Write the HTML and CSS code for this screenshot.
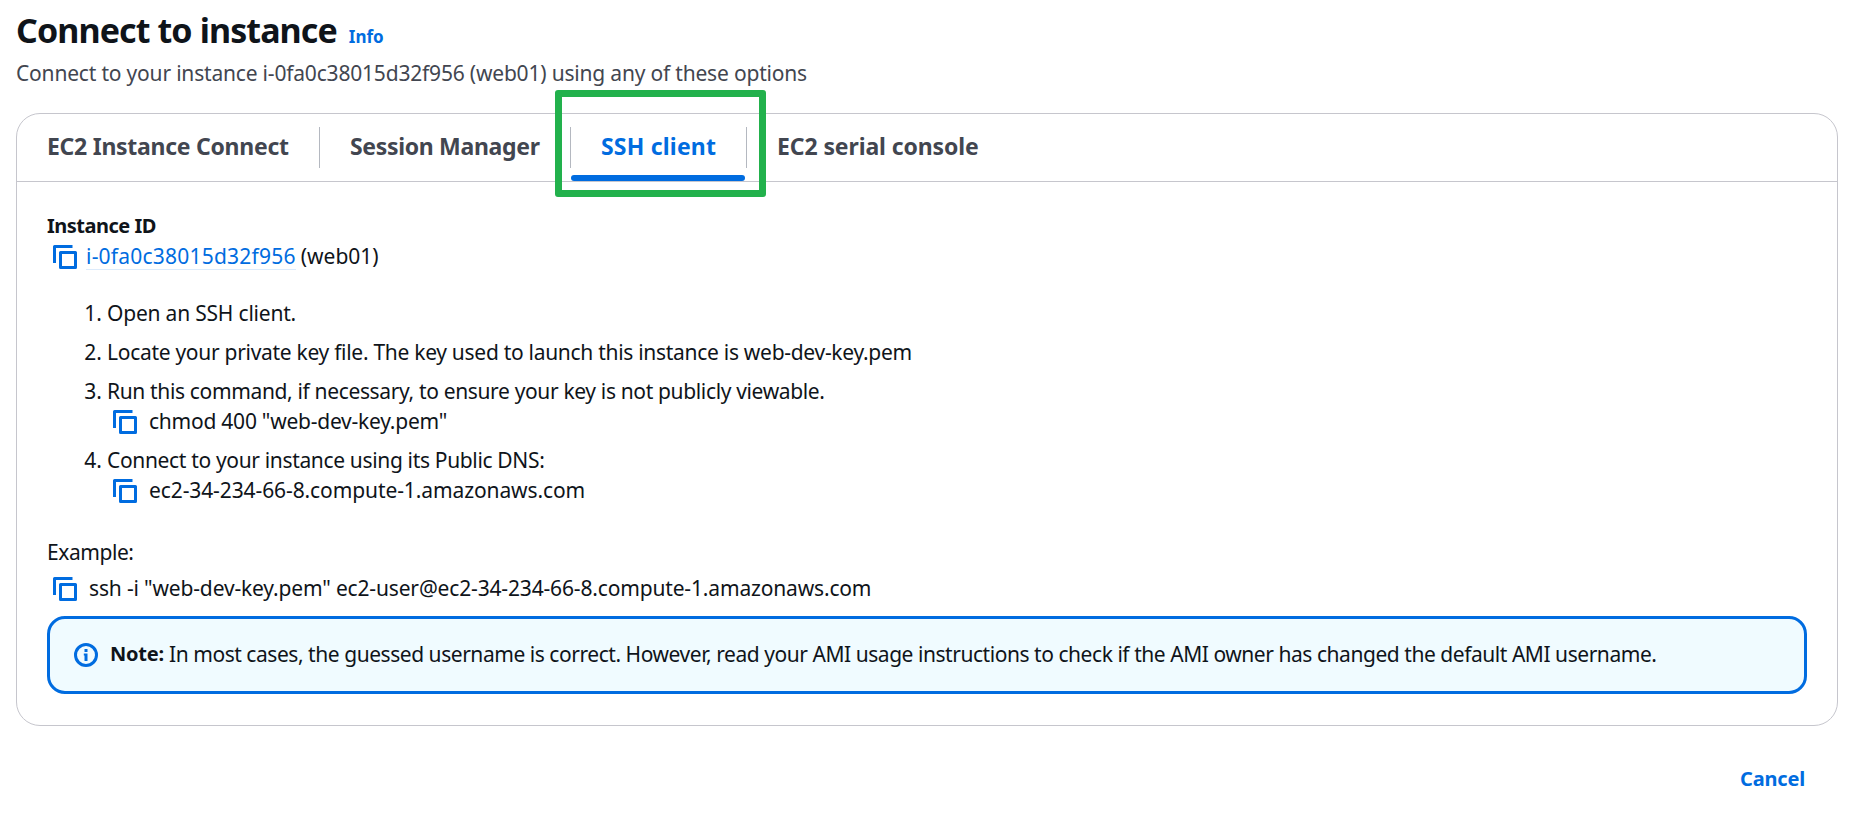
FILE: index.html
```
<!DOCTYPE html>
<html lang="en">
<head>
<meta charset="utf-8">
<title>Connect to instance</title>
<link rel="stylesheet" href="styles.css">
</head>
<body>
<svg class="sprite" aria-hidden="true">
  <symbol id="copy" viewBox="0 0 24 24">
    <path d="M1.5 18V1.5H19.5" fill="none" stroke="currentColor" stroke-width="3" stroke-linejoin="round"/>
    <rect x="7.5" y="7.5" width="15" height="15" fill="none" stroke="currentColor" stroke-width="3" stroke-linejoin="round"/>
  </symbol>
  <symbol id="info" viewBox="0 0 24 24">
    <circle cx="12" cy="12" r="10.5" fill="none" stroke="currentColor" stroke-width="3"/>
    <path d="M10.5 6h3v3h-3zM9.8 10.5h3.7v7.5h-3v-5.5h-.7z" fill="currentColor"/>
  </symbol>
</svg>
<main class="page">
  <header class="page-header">
    <div class="title-row">
      <h1 class="title">Connect to instance</h1>
      <a class="info-link">Info</a>
    </div>
    <p class="subtitle">Connect to your instance i-0fa0c38015d32f956 (web01) using any of these options</p>
  </header>

  <section class="panel">
    <nav class="tabs">
      <a class="tab tab-connect">EC2 Instance Connect</a>
      <span class="separator"></span>
      <a class="tab tab-session">Session Manager</a>
      <span class="separator"></span>
      <a class="tab tab-ssh active">SSH client<span class="highlight"></span></a>
      <span class="separator"></span>
      <a class="tab tab-serial">EC2 serial console</a>
    </nav>

    <div class="content">
      <h2 class="label">Instance ID</h2>
      <div class="copy-row id-row">
        <svg class="icon"><use href="#copy"/></svg>
        <span class="id-value"><a class="id-link">i-0fa0c38015d32f956</a><span class="id-name">(web01)</span></span>
      </div>

      <ol class="steps">
        <li class="step"><span class="num">1.</span><div class="step-open">Open an SSH client.</div></li>
        <li class="step"><span class="num">2.</span><div class="step-key">Locate your private key file. The key used to launch this instance is web-dev-key.pem</div></li>
        <li class="step"><span class="num">3.</span>
          <div>
            <div class="step-run">Run this command, if necessary, to ensure your key is not publicly viewable.</div>
            <div class="copy-row"><svg class="icon"><use href="#copy"/></svg><span class="cmd-chmod">chmod 400 "web-dev-key.pem"</span></div>
          </div>
        </li>
        <li class="step"><span class="num">4.</span>
          <div>
            <div class="step-dns">Connect to your instance using its Public DNS:</div>
            <div class="copy-row"><svg class="icon"><use href="#copy"/></svg><span class="cmd-dns">ec2-34-234-66-8.compute-1.amazonaws.com</span></div>
          </div>
        </li>
      </ol>

      <div class="example">Example:</div>
      <div class="copy-row"><svg class="icon"><use href="#copy"/></svg><span class="cmd-ssh">ssh -i "web-dev-key.pem" ec2-user@ec2-34-234-66-8.compute-1.amazonaws.com</span></div>

      <div class="alert">
        <svg class="icon"><use href="#info"/></svg>
        <b class="note">Note:</b>
        <span class="note-text">In most cases, the guessed username is correct. However, read your AMI usage instructions to check if the AMI owner has changed the default AMI username.</span>
      </div>
    </div>
  </section>

  <footer class="actions"><a class="cancel">Cancel</a></footer>
</main>
</body>
</html>
```
FILE: styles.css
```
* { box-sizing: border-box; }

body {
  margin: 0;
  background: #fff;
  color: #0f141a;
  font: 21px/30px "Noto Sans", "Open Sans", sans-serif;
  white-space: nowrap;
  overflow: hidden;
}

.sprite { display: none; }

.page { padding: 6px 14px 0 16px; }

.page-header { height: 107px; }

.title-row {
  display: flex;
  align-items: baseline;
  gap: 12px;
  height: 48px;
}

.title {
  margin: 0;
  font-size: 34px;
  line-height: 48px;
  letter-spacing: -0.9px;
}

.info-link {
  color: #006ce0;
  font-size: 17px;
  font-weight: 700;
}

.subtitle {
  margin: 4px 0 0;
  color: #424650;
  letter-spacing: -0.19px;
}

.panel {
  height: 613px;
  border: 1px solid #c6c6cd;
  border-radius: 24px;
}

.tabs {
  display: flex;
  align-items: center;
  height: 68px;
  border-bottom: 1px solid #c6c6cd;
}

.separator {
  width: 1px;
  height: 41px;
  background: #b4b8c0;
}

.tab {
  position: relative;
  height: 67px;
  padding: 17px 0 0 30px;
  color: #424650;
  font-size: 23px;
  font-weight: 700;
}

.tab-connect { width: 302px; letter-spacing: -0.27px; }
.tab-session { width: 250px; letter-spacing: -0.32px; }
.tab-ssh { width: 175px; letter-spacing: 0.2px; }
.tab-serial { letter-spacing: -0.1px; }

.tab.active { color: #006ce0; }

.tab.active::after {
  content: "";
  position: absolute;
  left: 0;
  right: 1px;
  bottom: 0;
  height: 6px;
  border-radius: 3px;
  background: #006ce0;
}

.highlight {
  position: absolute;
  left: -16px;
  top: -24px;
  width: 211px;
  height: 107px;
  border: 7px solid #22b14c;
  border-radius: 3px;
}

.content { padding: 29px 30px 0; }

.label {
  margin: 0;
  font-size: 20px;
  line-height: 30px;
  letter-spacing: -0.5px;
}

.copy-row {
  display: flex;
  gap: 12px;
  padding-left: 6px;
}

.id-row { gap: 9px; }

.icon {
  flex: none;
  width: 24px;
  height: 24px;
  margin-top: 4px;
  color: #006ce0;
}

.id-value { display: flex; gap: 5px; }

.id-link {
  height: 29px;
  border-bottom: 1px solid #dcebfb;
  color: #006ce0;
  letter-spacing: 0.22px;
}

.steps {
  display: flex;
  flex-direction: column;
  gap: 9px;
  margin: 27px 0 0;
  padding: 0;
  list-style: none;
}

.step { display: flex; }

.num {
  width: 60px;
  padding-right: 5px;
  text-align: right;
}

.step-open { letter-spacing: -0.2px; }
.step-key { letter-spacing: -0.29px; }
.step-run { letter-spacing: -0.35px; }
.step-dns { letter-spacing: -0.34px; }
.cmd-chmod { letter-spacing: -0.24px; }
.cmd-dns { letter-spacing: -0.1px; }
.cmd-ssh { letter-spacing: -0.16px; }

.example {
  margin: 32px 0 6px;
  letter-spacing: -0.44px;
}

.alert {
  display: flex;
  height: 78px;
  margin-top: 13px;
  padding: 20px 24px;
  border: 3px solid #006ce0;
  border-radius: 18px;
  background: #f0fbff;
}

.note {
  margin: 0 5px 0 12px;
  font-size: 20px;
  letter-spacing: -0.2px;
}

.note-text { letter-spacing: -0.453px; }

.actions {
  display: flex;
  justify-content: flex-end;
  padding: 38px 33px 0 0;
}

.cancel {
  color: #006ce0;
  font-size: 20px;
  font-weight: 700;
  letter-spacing: -0.17px;
}
```
